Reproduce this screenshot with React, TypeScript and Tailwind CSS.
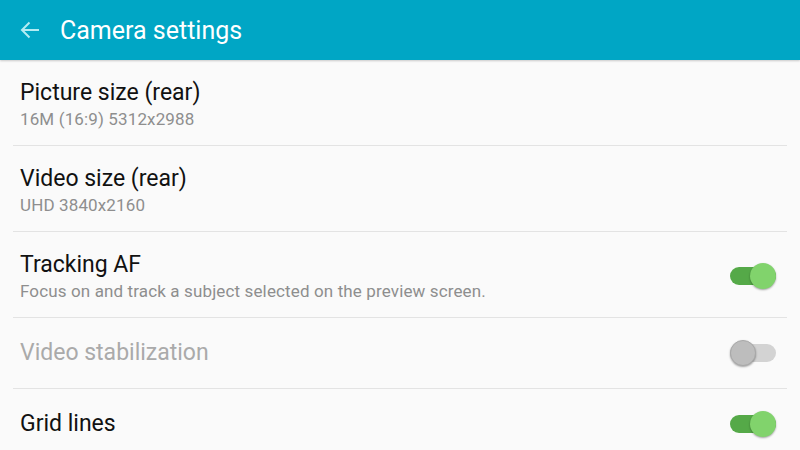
const items = [
  { title: "Picture size (rear)", sub: "16M (16:9) 5312x2988" },
  { title: "Video size (rear)", sub: "UHD 3840x2160" },
  { title: "Tracking AF", sub: "Focus on and track a subject selected on the preview screen.", toggle: "on" },
  { title: "Video stabilization", toggle: "disabled" },
  { title: "Grid lines", toggle: "on" },
];

const Toggle = ({ state }: { state: string }) => {
  const on = state === "on";
  return (
    <div className="relative w-[46px] h-[26px] flex items-center">
      <div className={`w-[46px] h-[18px] rounded-full ${on ? "bg-[#55a948]" : "bg-[#d3d3d3]"}`}></div>
      <div
        className={`absolute top-0 w-[26px] h-[26px] rounded-full shadow-[0_1px_2px_rgba(0,0,0,0.35)] ${
          on ? "right-0 bg-[#81d36c]" : "left-0 bg-[#bdbdbd] border border-[#a9a9a9]"
        }`}
      ></div>
    </div>
  );
};

const App = () => {
  return (
    <div className="w-[800px] h-[450px] overflow-hidden bg-[#fafafa] font-['Roboto',sans-serif]">
      <header className="h-[60px] bg-[#00a6c5] flex items-center px-[20px] gap-[20px] shadow-[0_1px_2px_rgba(0,0,0,0.2)] relative z-10">
        <svg width="20" height="20" viewBox="0 0 20 20" fill="none" stroke="#b4ecf3" strokeWidth="2">
          <path d="M19 10H2M9.5 2.5L2 10l7.5 7.5" />
        </svg>
        <h1 className="text-white text-[25px] leading-none mt-[1px]">Camera settings</h1>
      </header>
      <div>
        {items.map((it, i) => (
          <div key={i} className="mx-[13px] border-b border-[#e3e3e3] last:border-b-0">
            <div className={`flex items-center justify-between pl-[7px] pr-[11px] ${it.sub ? "h-[85px] pt-[3px]" : "h-[70px]"}`}>
              <div className="flex flex-col">
                <span className={`text-[23px] leading-[28px] ${it.toggle === "disabled" ? "text-[#aaaaaa]" : "text-[#111111]"}`}>
                  {it.title}
                </span>
                {it.sub && (
                  <span className="text-[17px] leading-[22px] tracking-[0.13px] text-[#8e8e8e] mt-[1px]">{it.sub}</span>
                )}
              </div>
              {it.toggle && <Toggle state={it.toggle} />}
            </div>
          </div>
        ))}
      </div>
    </div>
  );
};

export default App;
